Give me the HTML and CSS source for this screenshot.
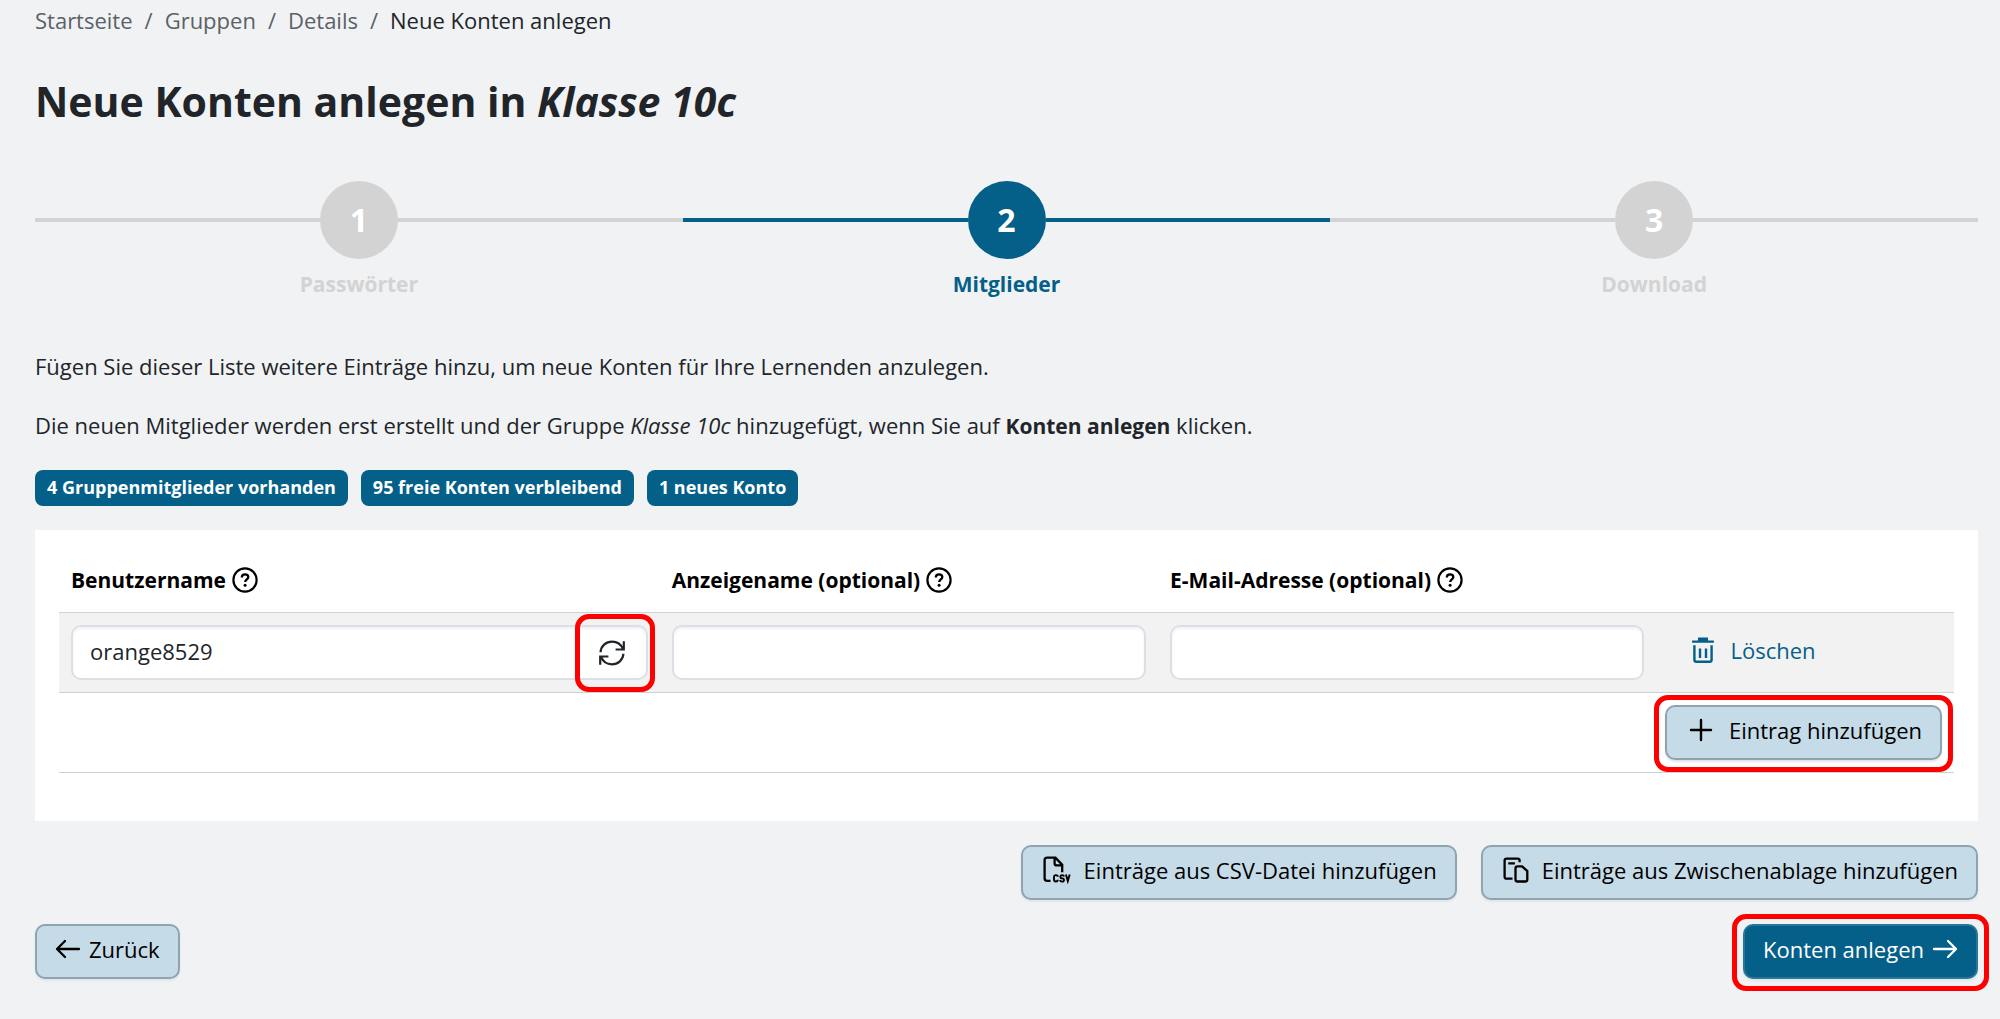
FILE: index.html
```html
<!DOCTYPE html>
<html lang="de">
<head>
<meta charset="utf-8">
<meta name="viewport" content="width=device-width, initial-scale=1">
<title>Neue Konten anlegen</title>
<link rel="stylesheet" href="styles.css">
</head>
<body>
<svg class="sprite" aria-hidden="true">
  <symbol id="icon-help" viewBox="0 0 26 26">
    <circle cx="13" cy="13" r="11.6" fill="none" stroke="currentColor" stroke-width="2.2"/>
    <path d="M9.8 10.4c0-1.9 1.4-3.1 3.3-3.1s3.2 1.1 3.2 2.8c0 2.3-3.1 2.5-3.1 5" fill="none" stroke="currentColor" stroke-width="2.3"/>
    <circle cx="13.1" cy="18.2" r="1.5" fill="currentColor"/>
  </symbol>
  <symbol id="icon-refresh" viewBox="0 0 26 26">
    <path d="M1.6 12.2C1.800 6 7 1.700 13 1.700c5 0 9.200 3 10.900 7.400M24.800 1.200v8.300h-8.200M24.400 13.800C24.200 20 19 24.300 13 24.300c-5 0-9.200-3-10.900-7.400M1.200 24.800v-8.300h8.200" fill="none" stroke="currentColor" stroke-width="2.200"/>
  </symbol>
  <symbol id="icon-trash" viewBox="0 0 22 26">
    <path d="M1 4.600h20M7.200 4V1.600h7.600V4" fill="none" stroke="currentColor" stroke-width="2.400" stroke-linecap="round"/>
    <path d="M7 1h8v4H7z" fill="currentColor"/>
    <path d="M2.400 8.200v14.500q0 2 2 2h13.200q2 0 2-2V8.200M8 11.500v9.500M14 11.500v9.500" fill="none" stroke="currentColor" stroke-width="2.400"/>
  </symbol>
  <symbol id="icon-plus" viewBox="0 0 24 24">
    <path d="M2 12h20M12 2v20" fill="none" stroke="currentColor" stroke-width="2.400" stroke-linecap="round"/>
  </symbol>
  <symbol id="icon-csv" viewBox="0 0 28 28">
    <path d="M7.500 24.800H4.200q-2.600 0-2.600-2.600V4.200q0-2.600 2.600-2.600h8.200l6.800 7.200v7.400M11.600 2v5.200q0 2.200 2.200 2.200h5" fill="none" stroke="currentColor" stroke-width="2.300"/>
    <path d="M14.800 20.800q0-1.700-1.900-1.700t-1.900 1.900v2.600q0 1.900 1.900 1.900t1.900-1.700M21 20.600q-.2-1.500-1.900-1.500t-1.700 1.600 1.800 1.700 1.800 1.700-1.900 1.500-1.900-1.500M22.900 18.500l1.900 6.600 1.900-6.600" fill="none" stroke="currentColor" stroke-width="1.900"/>
  </symbol>
  <symbol id="icon-clipboard" viewBox="0 0 26 26">
    <path d="M9.500 21.700H3.600q-2 0-2-2V3.600q0-2 2-2h11q2 0 2 2v1.600M5.300 6.300h6.600" fill="none" stroke="currentColor" stroke-width="2.300"/>
    <path d="M14.500 9.300h4.600l5.200 4.800v8.400q0 2-2 2h-7.800q-2 0-2-2V11.300q0-2 2-2z" fill="none" stroke="currentColor" stroke-width="2.300"/>
  </symbol>
  <symbol id="icon-left" viewBox="0 0 26 20">
    <path d="M24 10H2M10 2l-8 8 8 8" fill="none" stroke="currentColor" stroke-width="2.300" stroke-linecap="round" stroke-linejoin="round"/>
  </symbol>
  <symbol id="icon-right" viewBox="0 0 26 20">
    <path d="M2 10h22M16 2l8 8-8 8" fill="none" stroke="currentColor" stroke-width="2.300" stroke-linecap="round" stroke-linejoin="round"/>
  </symbol>
</svg>

<nav aria-label="Brotkrumen">
  <ol class="breadcrumb">
    <li><a href="#start">Startseite</a></li>
    <li><a href="#gruppen">Gruppen</a></li>
    <li><a href="#details">Details</a></li>
    <li class="current" aria-current="page">Neue Konten anlegen</li>
  </ol>
</nav>

<main>
  <h1>Neue Konten anlegen in <em>Klasse 10c</em></h1>

  <ol class="stepper">
    <li class="step"><span class="step-track"><span class="step-number">1</span></span><span class="step-label">Passwörter</span></li>
    <li class="step active" aria-current="step"><span class="step-track"><span class="step-number">2</span></span><span class="step-label">Mitglieder</span></li>
    <li class="step"><span class="step-track"><span class="step-number">3</span></span><span class="step-label">Download</span></li>
  </ol>

  <p>Fügen Sie dieser Liste weitere Einträge hinzu, um neue Konten für Ihre Lernenden anzulegen.</p>
  <p>Die neuen Mitglieder werden erst erstellt und der Gruppe <em>Klasse 10c</em> hinzugefügt, wenn Sie auf <strong>Konten anlegen</strong> klicken.</p>

  <div class="badges">
    <span class="badge">4 Gruppenmitglieder vorhanden</span>
    <span class="badge">95 freie Konten verbleibend</span>
    <span class="badge">1 neues Konto</span>
  </div>

  <form class="form">
    <div class="card">
      <table class="entries">
        <colgroup>
          <col class="col-user"><col class="col-name"><col class="col-mail"><col>
        </colgroup>
        <thead>
          <tr>
            <th scope="col"><div class="heading"><label for="user">Benutzername</label><svg class="icon-help"><use href="#icon-help"/></svg></div></th>
            <th scope="col"><div class="heading"><label for="name">Anzeigename (optional)</label><svg class="icon-help"><use href="#icon-help"/></svg></div></th>
            <th scope="col"><div class="heading"><label for="mail">E-Mail-Adresse (optional)</label><svg class="icon-help"><use href="#icon-help"/></svg></div></th>
            <td></td>
          </tr>
        </thead>
        <tbody>
          <tr class="entry">
            <td>
              <div class="input-group">
                <input id="user" type="text" value="orange8529">
                <button class="refresh marked marked-tight" type="button" aria-label="Neu erzeugen"><svg class="icon-square"><use href="#icon-refresh"/></svg></button>
              </div>
            </td>
            <td><input class="field" id="name" type="text"></td>
            <td><input class="field" id="mail" type="email"></td>
            <td><button class="btn btn-link" type="button"><svg class="icon-trash"><use href="#icon-trash"/></svg>Löschen</button></td>
          </tr>
          <tr>
            <td class="add-cell" colspan="4"><button class="btn btn-add marked" type="button"><svg class="icon-plus"><use href="#icon-plus"/></svg>Eintrag hinzufügen</button></td>
          </tr>
        </tbody>
      </table>
    </div>

    <div class="imports">
      <button class="btn" type="button"><svg class="icon-csv"><use href="#icon-csv"/></svg>Einträge aus CSV-Datei hinzufügen</button>
      <button class="btn" type="button"><svg class="icon-clipboard"><use href="#icon-clipboard"/></svg>Einträge aus Zwischenablage hinzufügen</button>
    </div>

    <div class="actions">
      <button class="btn btn-nav" type="button"><svg class="icon-arrow"><use href="#icon-left"/></svg>Zurück</button>
      <button class="btn btn-nav btn-primary marked" type="submit">Konten anlegen<svg class="icon-arrow"><use href="#icon-right"/></svg></button>
    </div>
  </form>
</main>
</body>
</html>
```
FILE: styles.css
```css
:root {
  --blue: #045f89;
  --pale-blue: #c6dbe8;
  --pale-border: #8fa3b1;
  --line: #ccd2da;
  --muted: #d3d3d3;
  --page: #f0f2f4;
  --marker: #ff0000;
}

* {
  box-sizing: border-box;
}

body {
  margin: 0;
  padding: 3px 22px 40px 35px;
  background: var(--page);
  color: #212529;
  font-family: "Open Sans", "Noto Sans", sans-serif;
  font-size: 22px;
  line-height: 34px;
}

button,
input {
  font: inherit;
  color: inherit;
}

svg {
  flex: none;
}

strong {
  font-size: 21px;
}

.sprite {
  display: none;
}

.breadcrumb {
  display: flex;
  margin: 0;
  padding: 0;
  list-style: none;
  color: #5c6166;
}

.breadcrumb li + li::before {
  content: "/";
  padding: 0 12px;
  color: #5c6166;
}

.breadcrumb a {
  color: inherit;
  text-decoration: none;
}

.breadcrumb .current {
  color: #212529;
}

h1 {
  margin: 34px 0 50px;
  font-size: 41px;
  line-height: 60px;
  font-weight: 700;
}

.stepper {
  display: flex;
  margin: 0 0 48px;
  padding: 0;
  list-style: none;
}

.step {
  flex: 1;
  display: flex;
  flex-direction: column;
  align-items: stretch;
  gap: 8px;
  color: var(--muted);
  font-size: 21px;
  font-weight: 700;
  text-align: center;
}

.step.active {
  color: var(--blue);
}

.step-track {
  display: flex;
  align-items: center;
}

.step-track::before,
.step-track::after {
  content: "";
  flex: 1;
  height: 4px;
  background: currentColor;
}

.step-number {
  width: 78px;
  height: 78px;
  border-radius: 50%;
  background: currentColor;
  font-size: 32px;
  line-height: 78px;
}

.step-number::first-line {
  color: #fff;
}

p {
  margin: 0 0 25px;
}

.badges {
  display: flex;
  flex-wrap: wrap;
  gap: 13px;
  margin: 27px 0 24px;
}

.badge {
  padding: 0 12px 2px;
  border-radius: 8px;
  background: var(--blue);
  color: #fff;
  font-size: 18px;
  font-weight: 700;
}

.card {
  padding: 18px 24px 48px;
  background: #fff;
}

.entries {
  width: 100%;
  table-layout: fixed;
  border-collapse: collapse;
}

.col-user {
  width: 31.7%;
}

.col-name,
.col-mail {
  width: 26.3%;
}

.entries th,
.entries td {
  padding: 12px;
  border-bottom: 1px solid var(--line);
  text-align: left;
  vertical-align: middle;
}

.entries thead th,
.entries thead td {
  padding: 15px 12px;
  color: #000;
}

.entries .entry {
  background: #f2f2f2;
}

.heading {
  display: flex;
  align-items: center;
  gap: 6px;
  font-size: 21px;
}

.entries .add-cell {
  text-align: right;
}

.field,
.input-group {
  display: flex;
  width: 100%;
  height: 55px;
  border: 2px solid #dce0e6;
  border-radius: 10px;
  background: #fff;
  box-shadow: inset 0 2px 3px #f1f2f4;
}

.field {
  padding: 0 18px;
}

.input-group input {
  flex: 1;
  min-width: 0;
  padding: 0 17px 4px;
  border: 0;
  background: transparent;
}

.refresh {
  display: grid;
  place-items: center;
  width: 67px;
  padding: 0;
  border: 0;
  background: transparent;
}

.btn {
  display: inline-flex;
  align-items: center;
  justify-content: center;
  gap: 13px;
  height: 55px;
  padding: 0 18px 5px 20px;
  border: 2px solid var(--pale-border);
  border-radius: 10px;
  background: var(--pale-blue);
  box-shadow: 0 2px 2px #e2e5e8;
  color: #000;
  white-space: nowrap;
  vertical-align: top;
}

.btn-add {
  gap: 16px;
  padding-left: 22px;
}

.btn-link {
  gap: 16px;
  padding-left: 22px;
  border-color: transparent;
  background: transparent;
  box-shadow: none;
  color: var(--blue);
}

.btn-nav {
  gap: 8px;
  padding: 0 18px 5px;
}

.btn-primary {
  border-color: #2a7699;
  background: var(--blue);
  color: #fff;
}

/* Red frames around the controls a lesson points out */
.marked {
  position: relative;
}

.marked::after {
  content: "";
  position: absolute;
  inset: -12px -13px -14px;
  border: 5px solid var(--marker);
  border-radius: 14px;
  pointer-events: none;
}

.marked-tight::after {
  inset: -13px -9px -14px -4px;
}

.imports {
  display: flex;
  flex-wrap: wrap;
  justify-content: flex-end;
  gap: 24px;
  margin: 24px 0;
}

.actions {
  display: flex;
  justify-content: space-between;
}

.icon-help {
  width: 26px;
  height: 26px;
}

.icon-square {
  width: 26px;
  height: 26px;
}

.icon-trash {
  width: 22px;
  height: 26px;
}

.icon-plus {
  width: 24px;
  height: 24px;
}

.icon-csv {
  width: 28px;
  height: 28px;
}

.icon-clipboard {
  width: 26px;
  height: 26px;
}

.icon-arrow {
  width: 26px;
  height: 20px;
}
```
